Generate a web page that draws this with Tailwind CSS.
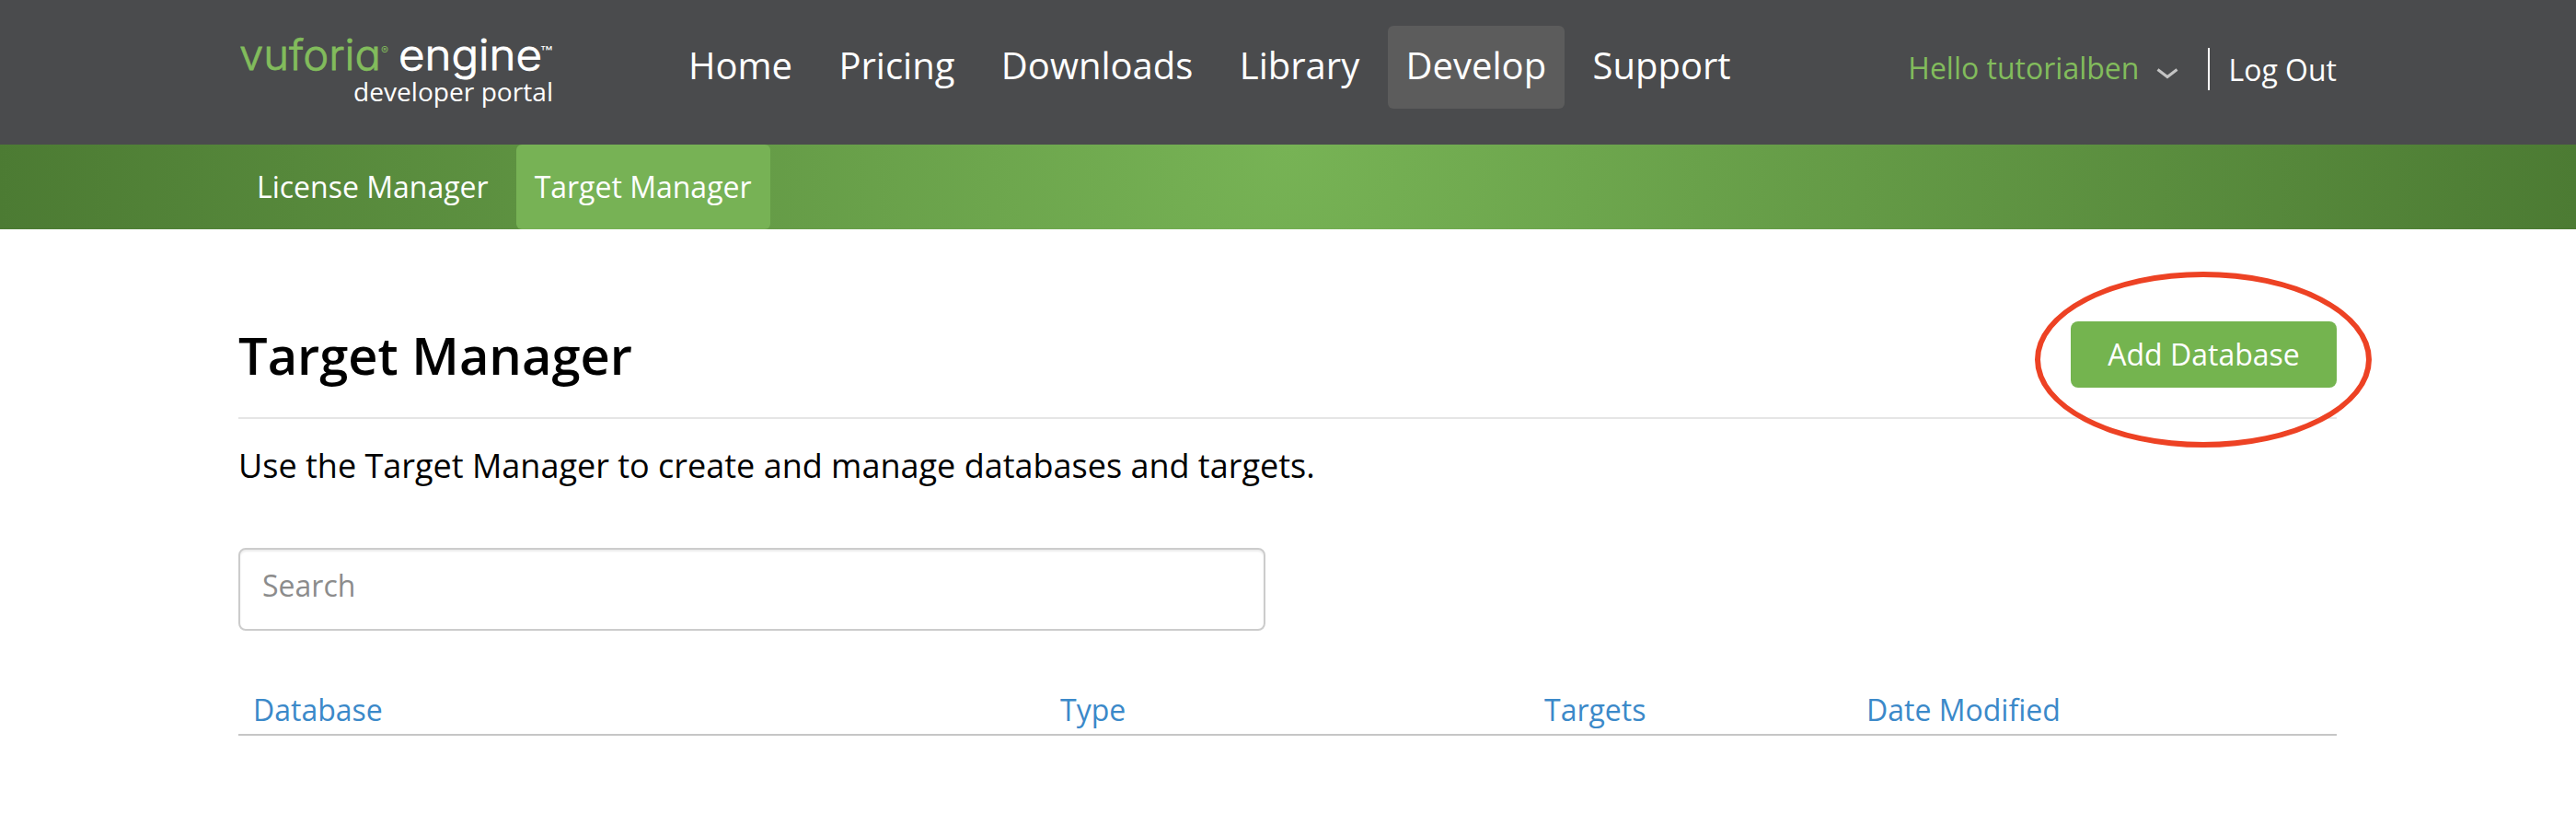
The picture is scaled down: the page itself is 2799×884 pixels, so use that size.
<!DOCTYPE html>
<html lang="en">
<head>
<meta charset="utf-8">
<title>Target Manager</title>
<script src="https://cdn.jsdelivr.net/npm/@tailwindcss/browser@4"></script>
</head>
<body class="bg-white text-black font-['Open_Sans',sans-serif] text-[32px] leading-[44px] overflow-hidden">
<header class="h-[157px] bg-[#4a4b4d] text-white px-[259px] flex items-start">
  <svg class="w-[345px] h-[124px] shrink-0" viewBox="0 0 345 124" role="img" aria-label="vuforia engine developer portal">
    <g font-family="Inter, sans-serif" style="font-feature-settings:'cv11' 1">
      <text x="1" y="76" font-size="46" font-weight="300" fill="#82bc5c" stroke="#82bc5c" stroke-width="0.800" textLength="154" lengthAdjust="spacingAndGlyphs">vuforia</text>
      <text x="155" y="58.500" font-size="12" fill="#82bc5c">®</text>
      <text x="174" y="76" font-size="46" font-weight="300" fill="#fff" stroke="#fff" stroke-width="0.900" textLength="156" lengthAdjust="spacingAndGlyphs">engine</text>
      <text x="328" y="63" font-size="17" fill="#fff" textLength="13.500" lengthAdjust="spacingAndGlyphs">™</text>
    </g>
    <text x="125" y="110" font-size="28" font-family="Open Sans, sans-serif" fill="#fff" textLength="217" lengthAdjust="spacingAndGlyphs">developer portal</text>
  </svg>
  <nav class="ml-[124px] mt-7 flex gap-[10.4px] text-[40px] leading-[85px]">
    <a class="h-[90px] px-5 rounded-md">Home</a>
    <a class="h-[90px] px-5 rounded-md">Pricing</a>
    <a class="h-[90px] px-5 rounded-md">Downloads</a>
    <a class="h-[90px] px-5 rounded-md">Library</a>
    <a class="h-[90px] px-5 rounded-md bg-[#5c5c5c]">Develop</a>
    <a class="h-[90px] px-5 rounded-md">Support</a>
  </nav>
  <div class="ml-auto mr-px mt-[52px] h-[46px] flex items-start">
    <a class="text-[#82bc5c]">Hello tutorialben</a>
    <svg class="w-6 h-3 ml-[19px] mt-[22px]" viewBox="0 0 24 12" fill="none" stroke="#c4c4c4" stroke-width="3"><path d="M1.500 1.500 12 9.500 22.500 1.500"/></svg>
    <span class="w-0.5 h-[46px] bg-white ml-[32px]"></span>
    <a class="ml-5 mt-0.5">Log Out</a>
  </div>
</header>
<nav class="h-[92px] bg-[radial-gradient(circle_at_top,#77b355,#4c7b33)] text-white px-[259px] flex gap-[10px] leading-[92px]">
  <a class="px-5">License Manager</a>
  <a class="px-5 rounded-md bg-[#77b255]">Target Manager</a>
</nav>
<main class="pl-[259px] pr-[260px] pt-[68px]">
  <div class="h-[138px] border-b-2 border-[#e5e5e5] flex items-center justify-between">
    <h1 class="text-[56px] font-semibold leading-[76px]">Target Manager</h1>
    <div class="relative">
      <button class="block w-[289px] h-[72px] rounded-lg bg-[#74b44f] text-white text-center">Add Database</button>
      <div class="absolute left-[-39px] top-[-54px] w-[366px] h-[191px] border-[6px] border-[#ed4224] rounded-[50%]"></div>
    </div>
  </div>
  <p class="mt-[26px] text-[36px] leading-[50px]">Use the Target Manager to create and manage databases and targets.</p>
  <div class="mt-[64px] w-[1116px] h-[90px] border-2 border-[#ccc] rounded-lg pl-6 leading-[78px] text-[#8c8c8c] shadow-[inset_0_2px_2px_rgba(0,0,0,0.075)]">Search</div>
  <div class="mt-[60px] h-[54px] border-b-2 border-[#c6c6c6] grid grid-cols-[877px_526px_350px_1fr] pl-4 leading-[52px] text-[#3b89c9]">
    <span>Database</span><span>Type</span><span>Targets</span><span>Date Modified</span>
  </div>
</main>
</body>
</html>
